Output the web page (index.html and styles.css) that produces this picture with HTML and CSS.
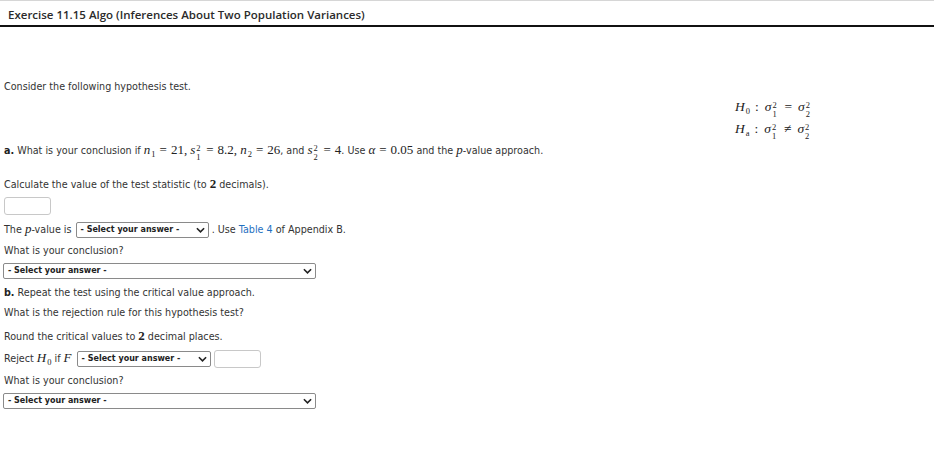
FILE: index.html
```html
<!DOCTYPE html>
<html>
<head>
<meta charset="utf-8">
<link rel="stylesheet" href="styles.css">
</head>
<body>
<header class="topbar">
  <h1 class="title">Exercise 11.15 Algo (Inferences About Two Population Variances)</h1>
</header>
<main class="content">
  <p class="line consider">Consider the following hypothesis test.</p>
  <div class="hyp">
    <div class="hyp-line"><span class="mi">H</span><span class="sb">0</span><span class="op">:</span><span class="mi">σ</span><span class="ss"><span class="sp">2</span><span class="sbx">1</span></span><span class="rel">=</span><span class="mi">σ</span><span class="ss"><span class="sp">2</span><span class="sbx">2</span></span></div>
    <div class="hyp-line"><span class="mi">H</span><span class="sb">a</span><span class="op">:</span><span class="mi">σ</span><span class="ss"><span class="sp">2</span><span class="sbx">1</span></span><span class="rel">≠</span><span class="mi">σ</span><span class="ss"><span class="sp">2</span><span class="sbx">2</span></span></div>
  </div>
  <p class="line qa"><b>a.</b> What is your conclusion if <span class="m"><i>n</i><span class="sb">1</span><span class="eq">=</span>21,</span> <span class="m"><i>s</i><span class="ss"><span class="sp">2</span><span class="sbx">1</span></span><span class="eq">=</span>8.2,</span> <span class="m"><i>n</i><span class="sb">2</span><span class="eq">=</span>26</span>, and <span class="m"><i>s</i><span class="ss"><span class="sp">2</span><span class="sbx">2</span></span><span class="eq">=</span>4</span>. Use <span class="m"><i>α</i><span class="eq">=</span>0.05</span> and the <span class="m"><i>p</i></span>-value approach.</p>
  <p class="line calc">Calculate the value of the test statistic (to <span class="m num">2</span> decimals).</p>
  <div class="row r-input"><span class="box"></span></div>
  <div class="row r-pval">The <span class="m"><i>p</i></span>-value is <span class="sel sel-s"><span>- Select your answer -</span><svg class="chev" viewBox="0 0 10 6"><path d="M1 1l4 4 4-4" fill="none" stroke="#222" stroke-width="1.8"/></svg></span> . Use <span class="link">Table 4</span> of Appendix B.</div>
  <p class="line concl1">What is your conclusion?</p>
  <div class="row r-sel1"><span class="sel sel-w"><span>- Select your answer -</span><svg class="chev" viewBox="0 0 10 6"><path d="M1 1l4 4 4-4" fill="none" stroke="#222" stroke-width="1.8"/></svg></span></div>
  <p class="line qb"><b>b.</b> Repeat the test using the critical value approach.</p>
  <p class="line rule">What is the rejection rule for this hypothesis test?</p>
  <p class="line round">Round the critical values to <span class="m num">2</span> decimal places.</p>
  <div class="row r-reject">Reject <span class="m"><i>H</i><span class="sb">0</span></span> if <span class="m"><i>F</i></span> <span class="sel sel-s2"><span>- Select your answer -</span><svg class="chev" viewBox="0 0 10 6"><path d="M1 1l4 4 4-4" fill="none" stroke="#222" stroke-width="1.8"/></svg></span><span class="box box2"></span></div>
  <p class="line concl2">What is your conclusion?</p>
  <div class="row r-sel2"><span class="sel sel-w"><span>- Select your answer -</span><svg class="chev" viewBox="0 0 10 6"><path d="M1 1l4 4 4-4" fill="none" stroke="#222" stroke-width="1.8"/></svg></span></div>
</main>
</body>
</html>
```
FILE: styles.css
```css
html, body { margin: 0; padding: 0; background: #fff; }
body { font-family: "DejaVu Sans", Verdana, sans-serif; font-size: 9.6px; color: #333; }

.topbar { border-top: 1px solid #d6d6d6; }
.title {
  margin: 0;
  height: 20px;
  padding: 4px 0 0 8px;
  line-height: 20px;
  font-family: "Open Sans", sans-serif;
  font-weight: 600;
  font-size: 11.5px;
  color: #2b2b2b;
  border-bottom: 2px solid #111;
}

.content { padding-left: 4px; }
.line { margin: 0; height: 14px; line-height: 14px; white-space: nowrap; }
.row { white-space: nowrap; }

.consider { margin-top: 53px; }

.hyp { margin-top: 2px; margin-left: 731px; font-family: "Liberation Serif", "DejaVu Serif", serif; font-size: 13.5px; color: #222; }
.hyp-line { height: 22px; line-height: 22px; white-space: nowrap; }
.mi { font-style: italic; }
.op { margin: 0 6px 0 5px; }
.rel { margin: 0 6px 0 5px; }
.hyp .ss { width: 7px; }

.sb { display: inline-block; font-size: 8.5px; line-height: 8px; vertical-align: -3px; margin-left: 1px; }
.ss { display: inline-block; vertical-align: -6px; font-size: 8.5px; line-height: 9px; margin-left: 1px; width: 6px; }
.sp, .sbx { display: block; height: 9px; }

.m { font-family: "Liberation Serif", "DejaVu Serif", serif; font-size: 13px; color: #222; }
.eq { margin: 0 4px; font-style: normal; }
.num { font-weight: bold; }

.qa { margin-top: 3px; }
.qa b, .qb b { color: #222; }
.calc { margin-top: 20px; }

.box { display: inline-block; vertical-align: middle; width: 45px; height: 16px; border: 1px solid #c8c8c8; border-radius: 3px; background: #fff; }

.sel {
  display: inline-flex; align-items: center; justify-content: space-between; vertical-align: middle;
  box-sizing: border-box; height: 16px; padding: 0 3px 0 4px;
  border: 1px solid #8a8a8a; border-radius: 2px; background: #fff;
  font-family: "DejaVu Sans", Verdana, sans-serif;
  font-size: 8px; font-weight: bold; color: #222;
}
.chev { width: 9px; height: 6px; }
.sel-s { width: 133px; margin-left: 1px; }
.sel-s2 { width: 134px; margin: 0 3px 0 2px; }
.sel-w { width: 313px; margin-left: -1px; }
.link { color: #1f6fbf; }

.r-input { margin-top: 6px; height: 18px; line-height: 18px; }
.r-input .box { vertical-align: top; }
.r-pval { margin-top: 6px; height: 16px; line-height: 16px; }
.concl1 { margin-top: 7px; }
.r-sel1 { margin-top: 5px; height: 16px; line-height: 16px; }
.r-sel1 .sel, .r-sel2 .sel { vertical-align: top; }
.qb { margin-top: 7px; }
.rule { margin-top: 6px; }
.round { margin-top: 9px; }
.r-reject { margin-top: 6px; height: 18px; line-height: 18px; }
.concl2 { margin-top: 7px; }
.r-sel2 { margin-top: 5px; height: 16px; line-height: 16px; }
```
